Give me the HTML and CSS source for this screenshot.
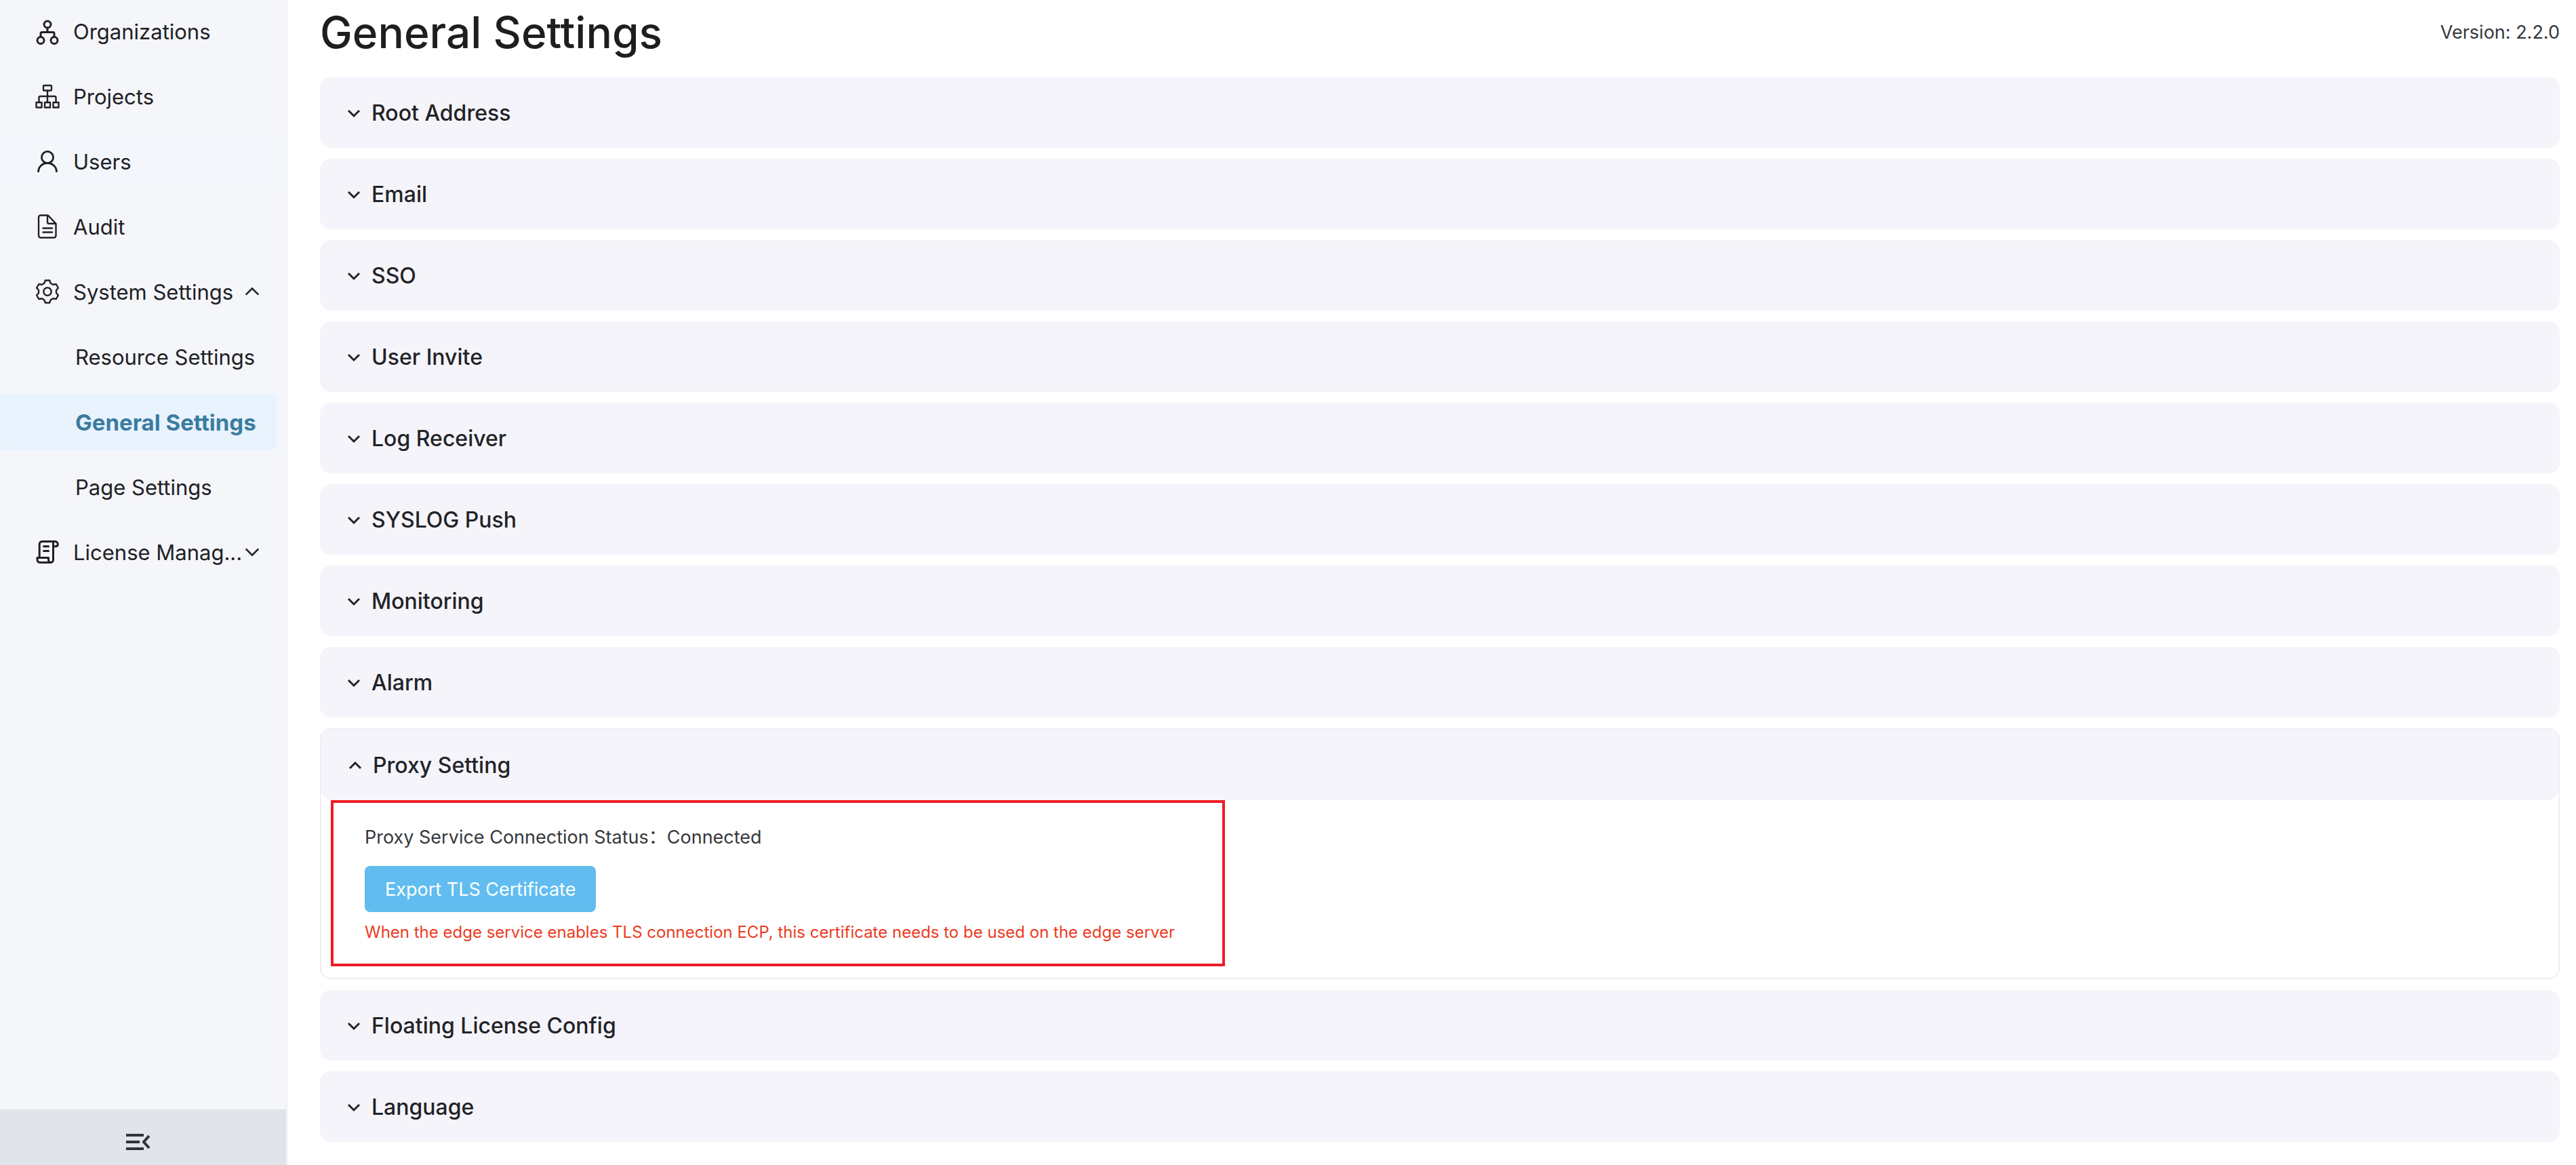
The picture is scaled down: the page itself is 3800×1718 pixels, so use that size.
FILE: index.html
```html
<!DOCTYPE html>
<html lang="en">
<head>
  <meta charset="utf-8">
  <meta name="viewport" content="width=device-width, initial-scale=1">
  <title>General Settings</title>
  <link rel="stylesheet" href="styles.css">
</head>
<body>
  <svg class="sprite" aria-hidden="true">
    <symbol id="chevron-down" viewBox="0 0 24 24"><path d="M4 8l8 8 8-8"/></symbol>
    <symbol id="chevron-up" viewBox="0 0 24 24"><path d="M4 16l8-8 8 8"/></symbol>
  </svg>
  <div class="app">
    <aside class="sidebar">
      <nav class="menu" aria-label="Main">
        <a class="menu-item" href="#organizations">
          <svg class="menu-icon heavy" viewBox="0 0 40 40"><circle cx="20" cy="10" r="5"/><circle cx="10" cy="33.5" r="5"/><circle cx="30" cy="33.5" r="5"/><path d="M20 15v6.500M10 28.500v-5a2 2 0 0 1 2-2h16a2 2 0 0 1 2 2v5"/></svg>
          <span class="menu-label">Organizations</span>
        </a>
        <a class="menu-item" href="#projects">
          <svg class="menu-icon" viewBox="0 0 40 40"><rect x="14" y="4" width="12" height="7.500" rx="1"/><rect x="3.500" y="29" width="8" height="7.500"/><rect x="16" y="29" width="8" height="7.500"/><rect x="28.500" y="29" width="8" height="7.500"/><path d="M20 11.500V29M7.500 29v-7a2 2 0 0 1 2-2h21a2 2 0 0 1 2 2v7"/></svg>
          <span class="menu-label">Projects</span>
        </a>
        <a class="menu-item hovered" href="#users">
          <svg class="menu-icon person" viewBox="0 0 40 40"><circle cx="20" cy="14" r="8.600"/><path d="M6.500 36c0-8 6-13.500 13.500-13.500S33.500 28 33.500 36"/></svg>
          <span class="menu-label">Users</span>
        </a>
        <a class="menu-item" href="#audit">
          <svg class="menu-icon" viewBox="0 0 40 40"><path d="M20 3.500H10a3 3 0 0 0-3 3v27a3 3 0 0 0 3 3h19.500a3 3 0 0 0 3-3V15.800L20.800 3.500zM20 3.500v10a2.300 2.300 0 0 0 2.300 2.300h10.200M13.500 22.500h13.500M13.500 28.500h13.500"/></svg>
          <span class="menu-label">Audit</span>
        </a>
        <button class="menu-item" type="button" aria-expanded="true">
          <svg class="menu-icon" viewBox="-20 -20 40 40"><path d="M-3.200-16.500H3.200L4.800-12.200L8.200-10.300L12.700-11L15.900-5.500L13-1.900V1.900L15.900 5.500L12.700 11L8.200 10.300L4.800 12.200L3.200 16.500H-3.200L-4.800 12.200L-8.200 10.300L-12.700 11L-15.900 5.500L-13 1.900V-1.900L-15.900-5.500L-12.700-11L-8.200-10.300L-4.800-12.200Z"/><circle r="5.700"/></svg>
          <span class="menu-label">System Settings</span>
          <svg class="menu-chevron"><use href="#chevron-up"/></svg>
        </button>
        <a class="menu-item sub" href="#resource">Resource Settings</a>
        <a class="menu-item sub active" href="#general" aria-current="page">General Settings</a>
        <a class="menu-item sub" href="#page">Page Settings</a>
        <button class="menu-item" type="button" aria-expanded="false">
          <svg class="menu-icon heavy" viewBox="0 0 40 40"><path d="M8.200 28.500V8.500a4 4 0 0 1 4-4H31.500a4 4 0 0 1 3.800 4c0 2.500-1 3.300-3 3.300h-3.800M28.500 5.500V31.500a4 4 0 0 1-4 4H9a4 4 0 0 1-4-4v-3h16.500v3a3.500 3.500 0 0 0 3.500 4M14.500 11.700h7M14.500 18.500h7"/></svg>
          <span class="menu-label">License Manag...</span>
          <svg class="menu-chevron"><use href="#chevron-down"/></svg>
        </button>
      </nav>
      <button class="collapse" type="button" aria-label="Collapse menu">
        <svg class="collapse-icon" viewBox="0 0 36 24"><path d="M0 2h26M0 12h20M0 22h26M34 3l-8 9 8 9"/></svg>
      </button>
    </aside>
    <main class="content">
      <header class="page-head">
        <h1>General Settings</h1>
        <span class="version">Version: 2.2.0</span>
      </header>
      <button class="card-head" type="button" aria-expanded="false"><svg class="card-chevron"><use href="#chevron-down"/></svg>Root Address</button>
      <button class="card-head" type="button" aria-expanded="false"><svg class="card-chevron"><use href="#chevron-down"/></svg>Email</button>
      <button class="card-head" type="button" aria-expanded="false"><svg class="card-chevron"><use href="#chevron-down"/></svg>SSO</button>
      <button class="card-head" type="button" aria-expanded="false"><svg class="card-chevron"><use href="#chevron-down"/></svg>User Invite</button>
      <button class="card-head" type="button" aria-expanded="false"><svg class="card-chevron"><use href="#chevron-down"/></svg>Log Receiver</button>
      <button class="card-head" type="button" aria-expanded="false"><svg class="card-chevron"><use href="#chevron-down"/></svg>SYSLOG Push</button>
      <button class="card-head" type="button" aria-expanded="false"><svg class="card-chevron"><use href="#chevron-down"/></svg>Monitoring</button>
      <button class="card-head" type="button" aria-expanded="false"><svg class="card-chevron"><use href="#chevron-down"/></svg>Alarm</button>
      <section class="card-open">
        <button class="card-head" type="button" aria-expanded="true"><svg class="card-chevron"><use href="#chevron-up"/></svg>Proxy Setting</button>
        <div class="callout">
          <p class="status">Proxy Service Connection Status：Connected</p>
          <button class="primary" type="button">Export TLS Certificate</button>
          <p class="hint">When the edge service enables TLS connection ECP, this certificate needs to be used on the edge server</p>
        </div>
      </section>
      <button class="card-head" type="button" aria-expanded="false"><svg class="card-chevron"><use href="#chevron-down"/></svg>Floating License Config</button>
      <button class="card-head" type="button" aria-expanded="false"><svg class="card-chevron"><use href="#chevron-down"/></svg>Language</button>
    </main>
  </div>
</body>
</html>
```
FILE: styles.css
```css
* {
  box-sizing: border-box;
}

body {
  margin: 0;
  background: #fff;
  color: #35373b;
  font-family: Inter, "Noto Sans CJK SC", sans-serif;
  font-size: 27px;
  line-height: 36px;
}

button {
  border: 0;
  font: inherit;
  cursor: pointer;
}

h1,
p {
  margin: 0;
}

svg {
  flex: none;
  fill: none;
  stroke: currentColor;
}

.sprite {
  display: none;
}

.app {
  display: flex;
  min-height: 100vh;
}

/* Sidebar */
.sidebar {
  display: flex;
  flex: none;
  flex-direction: column;
  width: 424px;
  border-right: 2px solid #efeff4;
  background: #f5f6fa;
}

.menu {
  display: flex;
  flex: 1;
  flex-direction: column;
  gap: 12px;
  padding: 4px 14px 4px 0;
}

.menu-item {
  display: flex;
  align-items: center;
  width: 100%;
  height: 84px;
  padding: 0 22px 0 50px;
  border-radius: 6px;
  background: none;
  color: #202124;
  font-size: 31px;
  line-height: 40px;
  text-align: left;
  text-decoration: none;
}

.menu-label {
  padding-top: 2px;
}

.menu-item.sub {
  padding-top: 2px;
  padding-left: 111px;
}

.menu-item.hovered {
  background: #f3f7fc;
}

.menu-item.active {
  background: #e8f3fd;
  color: #3b7ba0;
  font-size: 33px;
  font-weight: 700;
}

.menu-icon {
  width: 40px;
  height: 40px;
  margin-right: 18px;
  stroke-linejoin: round;
  stroke-linecap: round;
  stroke-width: 2.4;
}

.menu-icon.heavy {
  stroke-width: 3;
}

.menu-icon.person {
  stroke-linecap: butt;
  stroke-width: 2.8;
}

.menu-chevron {
  width: 28px;
  height: 28px;
  margin-left: auto;
  stroke-width: 2.2;
}

.collapse {
  display: flex;
  justify-content: center;
  height: 82px;
  padding: 36px 14px 0 0;
  background: #e1e4eb;
  color: #303338;
}

.collapse-icon {
  width: 36px;
  height: 24px;
  stroke-width: 4;
}

/* Content */
.content {
  display: flex;
  flex: 1;
  flex-direction: column;
  gap: 16px;
  padding: 0 24px 32px 48px;
}

.page-head {
  display: flex;
  align-items: center;
  justify-content: space-between;
  height: 98px;
  padding-bottom: 2px;
}

h1 {
  color: #1e1e1e;
  font-size: 64px;
  font-weight: 500;
  line-height: 80px;
}

.card-head {
  display: flex;
  align-items: center;
  gap: 14px;
  width: 100%;
  height: 104px;
  padding: 2px 38px 0;
  border-radius: 16px;
  background: #f5f4fa;
  color: #222327;
  font-size: 32px;
  font-weight: 500;
  line-height: 40px;
}

.card-chevron {
  width: 24px;
  height: 24px;
  stroke-width: 3;
}

.card-open {
  padding-bottom: 17px;
  border: 2px solid #eeedf5;
  border-radius: 16px;
}

.callout {
  width: fit-content;
  margin-left: 14px;
  padding: 33px 70px 28px 46px;
  border: 4px solid #ee1c25;
}

.primary {
  height: 68px;
  margin: 24px 0 12px;
  padding: 1px 30px 0;
  border-radius: 8px;
  background: #61bdf0;
  color: #fff;
}

.hint {
  color: #ec3b23;
  font-size: 24px;
}
```
